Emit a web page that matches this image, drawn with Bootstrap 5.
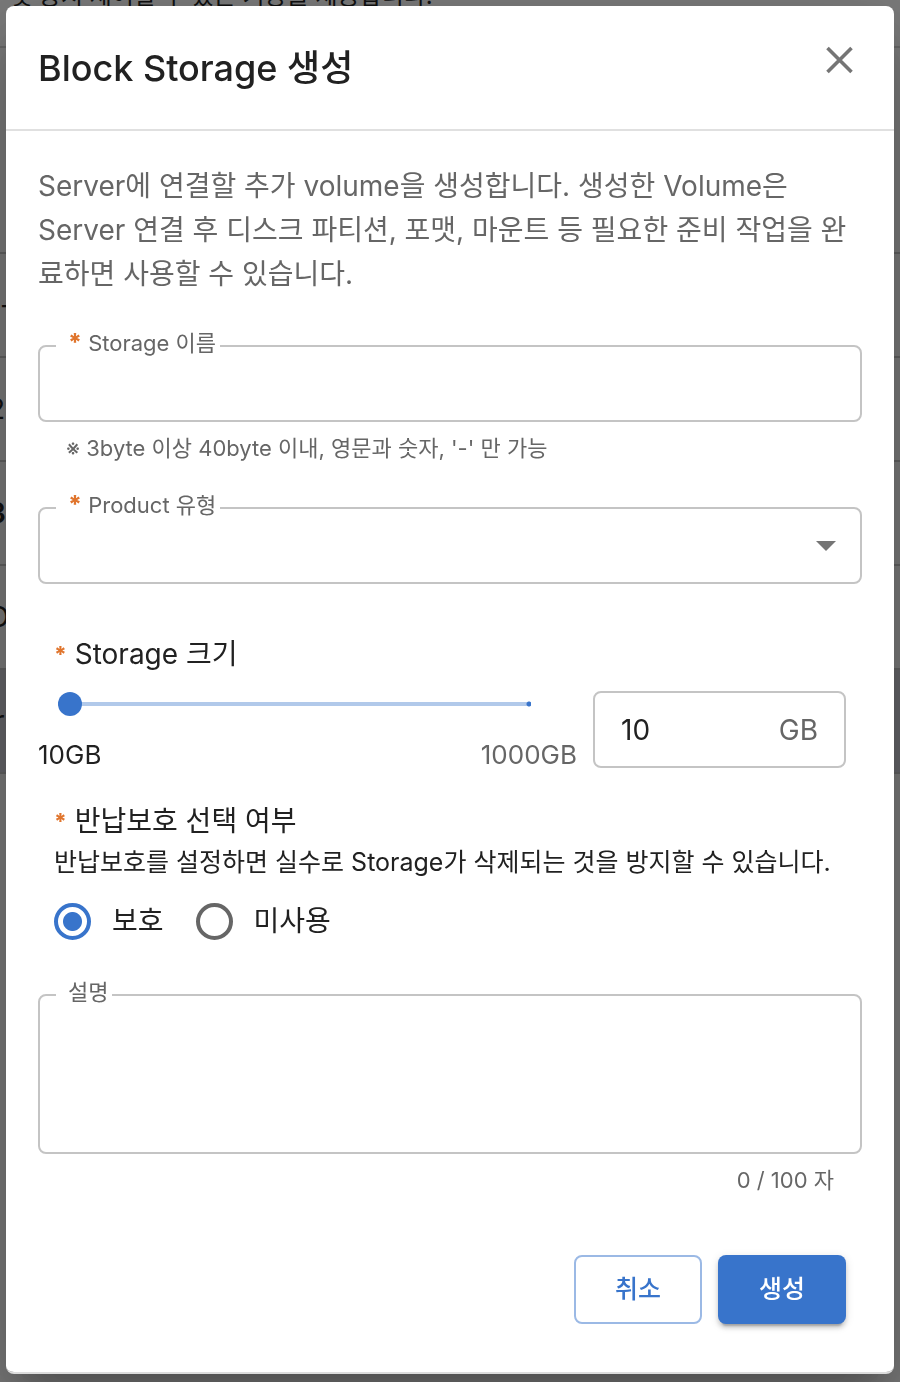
<!DOCTYPE html>
<html lang="ko">
<head>
<meta charset="utf-8">
<meta name="viewport" content="width=device-width, initial-scale=1">
<title>Block Storage 생성</title>
<link href="https://cdn.jsdelivr.net/npm/bootstrap@5.3.0/dist/css/bootstrap.min.css" rel="stylesheet">
<style>
  :root { --blue: #3874cb; --ink: #212121; --soft: #666; --line: #c4c4c4; --accent: #e0752d; }
  body { font-family: Inter, "Noto Sans CJK KR", sans-serif; color: var(--ink); background: #f4f4f4; overflow: hidden; }

  /* List page behind the dialog */
  .page-note { height: 46px; padding-left: 10px; font-size: 24px; line-height: 28px; margin: 0; white-space: nowrap; overflow: hidden; }
  .page-note span { display: block; margin-top: -18px; }
  .list-page { border-top: 2px solid #cfcfcf; }
  .list-head { height: 204px; }
  .list-line { height: 104px; border-top: 2px solid #c2c2c2; display: flex; align-items: center; font-size: 28px; }
  .list-line.picked { background: #c9c9d2; }
  .list-line span { margin-left: -12px; }
  .list-line .inset { margin-left: 0; }
  .list-line .near { margin-left: -6px; }
  .list-end { border-top: 2px solid #c2c2c2; }

  .modal-backdrop { --bs-backdrop-opacity: .5; }
  .modal-dialog { max-width: none; margin: 6px; }
  .modal-content { border: 0; border-bottom: 2px solid #dcdcdc; border-radius: 8px; box-shadow: 0 22px 30px -14px rgba(0,0,0,.2), 0 48px 76px 6px rgba(0,0,0,.14), 0 18px 92px 16px rgba(0,0,0,.12); color: var(--ink); }
  .modal-header { border-bottom: 2px solid #e0e0e0; padding: 32px; height: 125px; border-radius: 0; align-items: flex-start; }
  .modal-title { font-size: 36px; line-height: 60px; font-weight: 500; }
  .close-btn { border: 0; background: none; padding: 0; width: 44px; height: 44px; line-height: 0; color: #757575; }
  .modal-body { padding: 33px 32px 48px; }
  .intro { font-size: 28px; line-height: 44px; color: var(--soft); margin-bottom: 40px; }

  .star { color: var(--accent); font-weight: 800; font-size: 24px; line-height: 0; }
  .outlined { border: 2px solid var(--line); border-radius: 8px; padding: 0 24px 0 16px; margin: 0; min-width: 0; }
  .outlined legend { float: none; width: auto; margin: 0; padding: 0 4px 0 12px; height: 20px; line-height: 14px; font-size: 22px; color: var(--soft); }
  .outlined .form-control, .outlined .form-select { border: 0; box-shadow: none; background-color: transparent; height: 64px; padding: 0 10px; font-size: 28px; border-radius: 4px; }
  .outlined textarea.form-control { height: 147px; resize: none; display: block; }
  .outlined .form-select { padding: 0; background-image: url("data:image/svg+xml,%3Csvg xmlns='http://www.w3.org/2000/svg' viewBox='0 0 20 10'%3E%3Cpath d='M0 0h20L10 10z' fill='%23757575'/%3E%3C/svg%3E"); background-size: 20px 10px; background-position: right 0 top 23px; }
  .note { font-size: 22px; line-height: 32px; color: var(--soft); padding: 10px 28px 0; }
  .field-note { margin-bottom: 34px; }
  .group-title { display: block; font-size: 28px; line-height: 40px; }
  .group-title .star { font-size: 22px; vertical-align: 2px; }

  .size-part { margin-top: 50px; }
  .size-part .group-title { margin-bottom: 17px; }
  .size-range { flex: 1 1 0; min-width: 0; }
  .slide-wrap { padding: 1px 46px 0 20px; }
  .slide { appearance: none; display: block; width: 100%; height: 24px; margin: 0; background: radial-gradient(circle at calc(100% - 2px) 12px, var(--blue) 2px, transparent 3px), linear-gradient(#b1c9ea, #b1c9ea) center / 100% 4px no-repeat; }
  .slide::-webkit-slider-thumb { appearance: none; width: 24px; height: 24px; border-radius: 50%; background: var(--blue); }
  .range-ends { font-size: 26px; line-height: 36px; margin-top: 21px; }
  .range-max { color: var(--soft); }
  .size-box { border: 2px solid var(--line); border-radius: 8px; width: 253px; height: 77px; font-size: 28px; }
  .size-box .form-control { border: 0; background: none; color: var(--ink); font-size: 28px; padding: 0 0 0 26px; }
  .size-box .input-group-text { border: 0; background: none; color: var(--soft); font-size: 28px; padding: 0 26px 0 0; }
  .guard-part { margin: 28px 0 44px; }
  .help { font-size: 25px; line-height: 42px; }
  .picks { gap: 32px; margin-top: 18px; }
  .pick { display: flex; align-items: center; gap: 21px; padding: 0; margin: 0; min-height: 0; font-size: 28px; line-height: 40px; }
  .pick .form-check-input { width: 37px; height: 37px; margin: 0; float: none; border: 4px solid var(--soft); }
  .pick .form-check-input:checked { border-color: var(--blue); background: radial-gradient(circle, var(--blue) 9px, #fff 10px); }
  .acts { margin-top: 59px; }
  .act { width: 128px; height: 69px; border-radius: 8px; font-size: 25px; font-weight: 500; }
  .act-line { border: 2px solid #9bb9e5; color: var(--blue); }
  .act-fill { background: var(--blue); color: #fff; border: 0; box-shadow: 0 6px 2px -4px rgba(0,0,0,.2), 0 4px 4px rgba(0,0,0,.14), 0 2px 10px rgba(0,0,0,.12); }
</style>
</head>
<body>
<main aria-hidden="true">
  <p class="page-note"><span>및 중지 제어할 수 있는 기능을 제공합니다.</span></p>
  <div class="list-page">
    <div class="list-head"></div>
    <div class="list-line"><span class="inset">-</span></div>
    <div class="list-line"><span>2</span></div>
    <div class="list-line"><span class="fw-semibold">3</span></div>
    <div class="list-line"><span>O</span></div>
    <div class="list-line picked"><span class="near">r</span></div>
    <div class="list-end"></div>
  </div>
</main>
<div class="modal-backdrop show"></div>

<div class="modal d-block" role="dialog" aria-modal="true" aria-labelledby="dlgTitle">
  <div class="modal-dialog">
    <form class="modal-content">
      <div class="modal-header justify-content-between">
        <h1 class="modal-title" id="dlgTitle">Block Storage 생성</h1>
        <button type="button" class="close-btn" aria-label="닫기">
          <svg width="44" height="44" viewBox="0 0 44 44" fill="none" stroke="currentColor" stroke-width="3.6"><path d="M9.500 10l24 24M33.500 10l-24 24"/></svg>
        </button>
      </div>
      <div class="modal-body">
        <p class="intro">Server에 연결할 추가 volume을 생성합니다. 생성한 Volume은 Server 연결 후 디스크 파티션, 포맷, 마운트 등 필요한 준비 작업을 완료하면 사용할 수 있습니다.</p>

        <fieldset class="outlined">
          <legend><label for="stName"><span class="star">*</span> Storage 이름</label></legend>
          <input class="form-control" id="stName" type="text">
        </fieldset>
        <div class="note field-note">※ 3byte 이상 40byte 이내, 영문과 숫자, '-' 만 가능</div>

        <fieldset class="outlined">
          <legend><label for="stType"><span class="star">*</span> Product 유형</label></legend>
          <select class="form-select" id="stType"><option></option></select>
        </fieldset>

        <div class="size-part">
          <label class="group-title ps-3" for="stSize"><span class="star">*</span> Storage 크기</label>
          <div class="d-flex gap-3 pe-3">
            <div class="size-range">
              <div class="slide-wrap"><input class="slide" id="stSize" type="range" min="10" max="1000" value="10"></div>
              <div class="range-ends d-flex justify-content-between"><span>10GB</span><span class="range-max">1000GB</span></div>
            </div>
            <div class="input-group size-box flex-nowrap">
              <input class="form-control" type="text" value="10" aria-label="Storage 크기">
              <span class="input-group-text">GB</span>
            </div>
          </div>
        </div>

        <div class="ps-3 guard-part" role="radiogroup" aria-labelledby="guardTitle">
          <div class="group-title" id="guardTitle"><span class="star">*</span> 반납보호 선택 여부</div>
          <div class="help">반납보호를 설정하면 실수로 Storage가 삭제되는 것을 방지할 수 있습니다.</div>
          <div class="d-flex picks">
            <label class="pick form-check"><input class="form-check-input" type="radio" name="guard" checked>보호</label>
            <label class="pick form-check"><input class="form-check-input" type="radio" name="guard">미사용</label>
          </div>
        </div>

        <fieldset class="outlined">
          <legend><label for="stMemo">설명</label></legend>
          <textarea class="form-control" id="stMemo"></textarea>
        </fieldset>
        <div class="note text-end">0 / 100 자</div>

        <div class="acts d-flex justify-content-end gap-3 pe-3">
          <button type="button" class="btn act act-line">취소</button>
          <button type="submit" class="btn act act-fill">생성</button>
        </div>
      </div>
    </form>
  </div>
</div>
<script src="https://cdn.jsdelivr.net/npm/bootstrap@5.3.0/dist/js/bootstrap.bundle.min.js"></script>
</body>
</html>
